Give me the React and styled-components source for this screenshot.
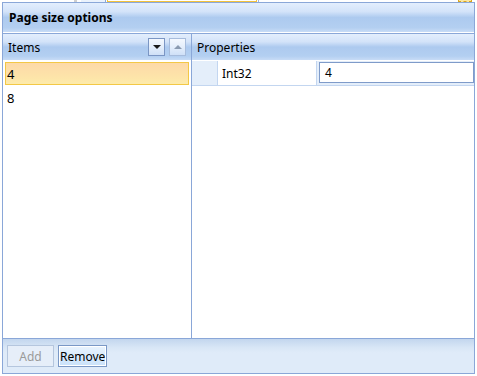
import React, { useState } from 'react'
import styled, { createGlobalStyle } from 'styled-components'

const GlobalStyle = createGlobalStyle`
	html, body {
		margin: 0;
		padding: 0;
		background: #ffffff;
	}
	body {
		font-family: "Noto Sans", "Open Sans", sans-serif;
		font-size: 12px;
		color: #000;
	}
`

const headerGradient = `linear-gradient(to bottom, #e3eefd 0%, #d3e3f9 30%, #adcaef 50%, #b3cff1 85%, #c8dcf6 100%)`

const items = ['4', '8']

export default function App() {
	const [selected, setSelected] = useState(0)

	return (
		<>
			<GlobalStyle />
			{/* bits of the window behind the dialog */}
			<BackStrip>
				<BackPiece $left={74} $width={3} $bg='#cfcfcf' />
				<BackPiece $left={4} $width={25} $bg='#eaf2fc' $border='0 1px 0 0' />
				<BackPiece $left={1} $width={150} $bg='#ffffff' $border='0 1px 1px 1px' $color='#f2c23c' />
				<BackPiece $left={1} $width={1} $bg='#9fb6d8' />
				<Spacer />
				<BackPiece $left={0} $width={14} $bg='#fbe6a0' $border='0 1px 1px 1px' $color='#d9a520' $dashed />
				<BackPiece $left={0} $width={5} $bg='#ffffff' />
			</BackStrip>
			<Dialog>
				<TitleBar>Page size options</TitleBar>
				<Body>
					<ItemsPanel>
						<PanelHeader>
							<span>Items</span>
							<HeaderButtons>
								<ArrowButton $active>
									<Triangle $down $active />
								</ArrowButton>
								<ArrowButton>
									<Triangle />
								</ArrowButton>
							</HeaderButtons>
						</PanelHeader>
						<List>
							{items.map((item, i) => (
								<ListItem
									key={item}
									$selected={i === selected}
									onClick={() => setSelected(i)}
								>
									{item}
								</ListItem>
							))}
						</List>
					</ItemsPanel>
					<PropsPanel>
						<PanelHeader>
							<span>Properties</span>
						</PanelHeader>
						<Grid>
							<Indent />
							<NameCell>Int32</NameCell>
							<ValueCell>{items[selected]}</ValueCell>
						</Grid>
					</PropsPanel>
				</Body>
				<Footer>
					<Button disabled>Add</Button>
					<Button $focused>Remove</Button>
				</Footer>
			</Dialog>
		</>
	)
}

const BackStrip = styled.div`
	height: 2px;
	display: flex;
	overflow: hidden;
`

const BackPiece = styled.div`
	margin-left: ${p => p.$left}px;
	width: ${p => p.$width}px;
	height: 2px;
	box-sizing: border-box;
	background: ${p => p.$bg};
	border-style: ${p => (p.$dashed ? 'dashed' : 'solid')};
	border-color: ${p => p.$color || '#8aa7d8'};
	border-width: ${p => p.$border || '0'};
`

const Spacer = styled.div`
	flex: 1;
`

const Dialog = styled.div`
	display: flex;
	flex-direction: column;
	width: 471px;
	height: 370px;
	margin: 0 0 0 2px;
	border: 1px solid #8aa7d8;
	background: #ffffff;
`

const TitleBar = styled.div`
	height: 29px;
	display: flex;
	align-items: center;
	padding-left: 6px;
	font-weight: 700;
	background: ${headerGradient};
	border-bottom: 1px solid #ffffff;
	box-shadow: 0 1px 0 #8aa7d8;
	margin-bottom: 1px;
`

const Body = styled.div`
	flex: 1;
	display: flex;
	min-height: 0;
`

const ItemsPanel = styled.div`
	width: 188px;
	display: flex;
	flex-direction: column;
	border-right: 1px solid #8aa7d8;
`

const PropsPanel = styled.div`
	flex: 1;
	display: flex;
	flex-direction: column;
`

const PanelHeader = styled.div`
	height: 26px;
	display: flex;
	align-items: center;
	justify-content: space-between;
	padding: 0 5px 0 5px;
	background: ${headerGradient};
	border-bottom: 1px solid #ffffff;
	flex-shrink: 0;
`

const HeaderButtons = styled.div`
	display: flex;
	gap: 4px;
`

const ArrowButton = styled.div`
	width: 15px;
	height: 16px;
	display: flex;
	align-items: center;
	justify-content: center;
	border: 1px solid ${p => (p.$active ? '#7b96c4' : '#a7bcdc')};
	background: linear-gradient(to bottom, #f4f8fe 0%, #e4eefb 50%, #cfe0f7 100%);
`

const Triangle = styled.div`
	width: 0;
	height: 0;
	border-left: 4px solid transparent;
	border-right: 4px solid transparent;
	${p =>
		p.$down
			? `border-top: 4px solid ${p.$active ? '#1a1a1a' : '#8a8a8a'};`
			: `border-bottom: 4px solid #8a9ab0;`}
`

const List = styled.div`
	flex: 1;
	padding: 1px 2px;
`

const ListItem = styled.div`
	height: 21px;
	display: flex;
	align-items: center;
	padding-left: 1px;
	margin-bottom: 1px;
	border: 1px solid ${p => (p.$selected ? '#f3c846' : 'transparent')};
	background: ${p =>
		p.$selected
			? 'linear-gradient(to bottom, #fdd9a8 0%, #fde3a9 60%, #fdebab 100%)'
			: 'transparent'};
	font-size: 13px;
`

const Grid = styled.div`
	display: grid;
	grid-template-columns: 25px 100px 1fr;
	height: 24px;
	background: #e4eefa;
	border-bottom: 1px solid #c3d6f0;
`

const Indent = styled.div`
	background: #e4eefa;
`

const NameCell = styled.div`
	display: flex;
	align-items: center;
	padding-left: 4px;
	background: #ffffff;
	border-left: 1px solid #c3d6f0;
	border-right: 1px solid #c3d6f0;
	font-size: 12px;
`

const ValueCell = styled.div`
	display: flex;
	align-items: center;
	padding-left: 5px;
	margin: 1px 0 2px 2px;
	background: #ffffff;
	border: 1px solid #7f9bc9;
	font-size: 12px;
`

const Footer = styled.div`
	height: 34px;
	display: flex;
	align-items: center;
	gap: 4px;
	padding: 0 0 0 4px;
	border-top: 1px solid #8aa7d8;
	background: linear-gradient(to bottom, #c3d6ee 0%, #d8e6f6 25%, #dfebf9 40%, #dfebf9 100%);
	flex-shrink: 0;
`

const Button = styled.button`
	height: 22px;
	padding: 0 1px;
	min-width: 47px;
	font-family: inherit;
	font-size: 12px;
	color: ${p => (p.disabled ? '#9a9a9a' : '#000')};
	border: 1px solid ${p => (p.disabled ? '#b5c6de' : '#7a98c6')};
	background: ${p =>
		p.disabled
			? '#e6eef9'
			: 'linear-gradient(to bottom, #eaf4fe 0%, #d9ebfc 50%, #c9e1fa 100%)'};
	box-shadow: ${p => (p.$focused ? 'inset 0 0 0 1px #ffffff' : 'none')};
	border-radius: 0;
`
